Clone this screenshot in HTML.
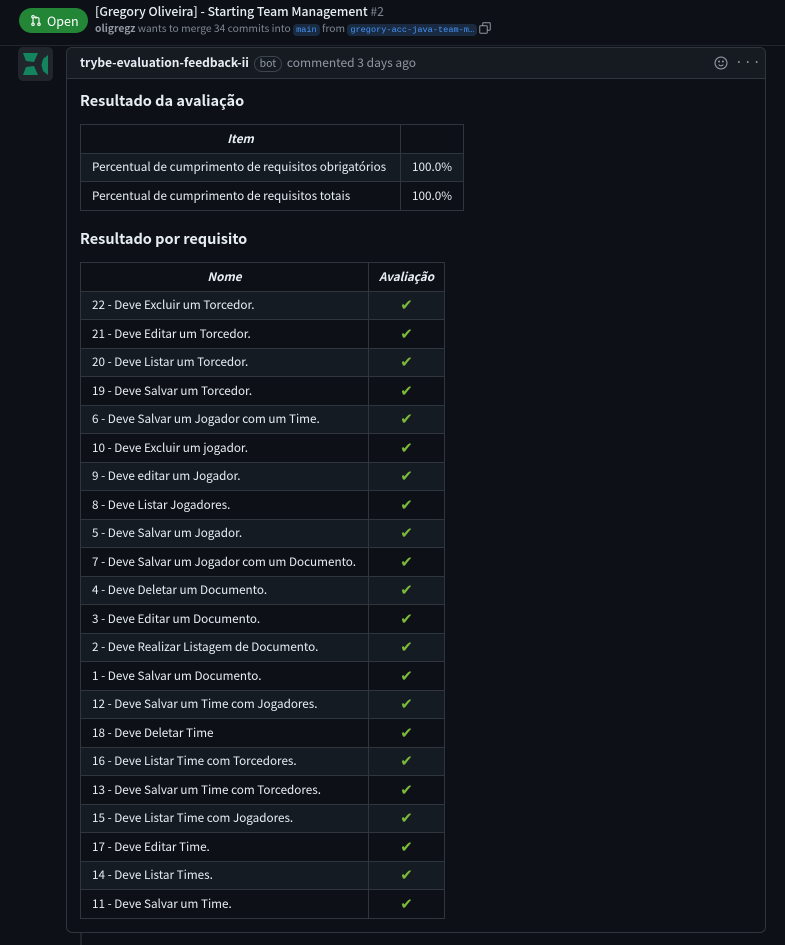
<!DOCTYPE html>
<html><head><meta charset="utf-8"><style>
*{box-sizing:border-box;margin:0;padding:0}
body{width:785px;height:945px;background:#0d1117;color:#e6edf3;font-family:"Noto Sans CJK JP","Liberation Sans",sans-serif;overflow:hidden;position:relative}
.badge{position:absolute;left:19px;top:8px;width:69px;height:25px;background:#238636;border-radius:13px;color:#fff;font-size:12.5px;line-height:25px;padding-left:28px}
.badge svg{position:absolute;left:11px;top:6px}
.title{position:absolute;left:95px;top:2px;font-size:12.2px;font-weight:500;line-height:18px;white-space:nowrap}
.title span{color:#7d8590;font-weight:400}
.sub{position:absolute;left:95px;top:20px;font-size:10.3px;color:#7d8590;line-height:16px;white-space:nowrap}
.sub b{color:#9198a1;font-weight:600}
.code{font-family:"Liberation Mono",monospace;font-size:8.6px;background:#1a2a40;color:#4493f8;padding:1px 3px;border-radius:4px}
.line{position:absolute;left:0;top:45px;width:785px;height:1px;background:#21262d}
.tl{position:absolute;left:80px;top:930px;width:2px;height:15px;background:#21262d}
.avatar{position:absolute;left:18px;top:47px;width:35px;height:34px;background:#21262d;border-radius:5px}
.box{position:absolute;left:66px;top:47px;width:700px;height:886px;border:1px solid #30363d;border-radius:6px;background:#0d1117}
.hdr{height:31px;background:#161b22;border-bottom:1px solid #30363d;border-radius:6px 6px 0 0;font-size:12px;line-height:30px;padding-left:13px;color:#9198a1;position:relative}
.hdr b{color:#e6edf3;font-weight:600}
.bot{border:1px solid #3d444d;border-radius:10px;padding:0 5px;font-size:10.5px;line-height:14px;display:inline-block;margin:0 2px}
h3{position:absolute;left:13px;font-size:14.5px;font-weight:600;line-height:20px}
table{position:absolute;left:13px;border-collapse:collapse;font-size:11.7px;table-layout:fixed}
td,th{border:1px solid #30363d;padding:0 11px;height:28.5px;line-height:16px;white-space:nowrap;overflow:hidden}
th{font-style:italic;font-weight:600;text-align:center}
tr:nth-child(even) td{background:#151b23}
.c{text-align:center;color:#7cbb3a;font-size:15px;padding:0}
</style></head><body>
<div class="badge"><svg width="12" height="13" viewBox="0 0 16 16" fill="none" stroke="#fff" stroke-width="1.5"><circle cx="4" cy="3" r="1.6"/><circle cx="4" cy="13" r="1.6"/><circle cx="12" cy="13" r="1.6"/><path d="M4 4.6v6.8M12 11.4V6a2 2 0 0 0-2-2H7M8.5 2.5L7 4l1.5 1.5"/></svg>Open</div>
<div class="title">[Gregory Oliveira] - Starting Team Management <span>#2</span></div>
<div class="sub"><b>oligregz</b> wants to merge 34 commits into <span class="code">main</span> from <span class="code">gregory-acc-java-team-m…</span> <svg width="12" height="12" viewBox="0 0 16 16" fill="none" stroke="#9198a1" stroke-width="1.3" style="vertical-align:-2px"><rect x="1" y="5" width="10" height="10" rx="1"/><path d="M5 5V2a1 1 0 0 1 1-1h8a1 1 0 0 1 1 1v8a1 1 0 0 1-1 1h-3"/></svg></div>
<div class="line"></div>
<div class="tl"></div>
<div class="avatar"><svg width="35" height="34" viewBox="0 0 35 34" fill="#14845f"><path d="M5 6H20L16 15L8 14Z"/><path d="M5 28H20L16 19L8 20Z"/><path d="M30 8V28L25 24L23.5 18L25 12Z"/></svg></div>
<div class="box">
<div class="hdr"><b>trybe-evaluation-feedback-ii</b> <span class="bot">bot</span> commented 3 days ago
<svg style="position:absolute;left:647px;top:8px" width="14" height="14" viewBox="0 0 16 16" fill="none" stroke="#9198a1" stroke-width="1.3"><circle cx="8" cy="8" r="6.8"/><path d="M5.3 9.8c.8 1 1.6 1.4 2.7 1.4s1.9-.4 2.7-1.4"/><circle cx="5.8" cy="6.3" r=".5" fill="#9198a1"/><circle cx="10.2" cy="6.3" r=".5" fill="#9198a1"/></svg>
<span style="position:absolute;left:668px;top:-1px;color:#9198a1;font-size:14px;letter-spacing:1px">···</span></div>
<h3 style="top:43px">Resultado da avaliação</h3>
<table style="top:76px;width:383px">
<colgroup><col style="width:320px"><col style="width:63px"></colgroup>
<tr><th>Item</th><th></th></tr>
<tr><td>Percentual de cumprimento de requisitos obrigatórios</td><td>100.0%</td></tr>
<tr><td>Percentual de cumprimento de requisitos totais</td><td>100.0%</td></tr>
</table>
<h3 style="top:181px">Resultado por requisito</h3>
<table style="top:214px;width:364px">
<colgroup><col style="width:288px"><col style="width:76px"></colgroup>
<tr><th>Nome</th><th style="padding:0 4px">Avaliação</th></tr>
<tr><td>22 - Deve Excluir um Torcedor.</td><td class="c">✔</td></tr>
<tr><td>21 - Deve Editar um Torcedor.</td><td class="c">✔</td></tr>
<tr><td>20 - Deve Listar um Torcedor.</td><td class="c">✔</td></tr>
<tr><td>19 - Deve Salvar um Torcedor.</td><td class="c">✔</td></tr>
<tr><td>6 - Deve Salvar um Jogador com um Time.</td><td class="c">✔</td></tr>
<tr><td>10 - Deve Excluir um jogador.</td><td class="c">✔</td></tr>
<tr><td>9 - Deve editar um Jogador.</td><td class="c">✔</td></tr>
<tr><td>8 - Deve Listar Jogadores.</td><td class="c">✔</td></tr>
<tr><td>5 - Deve Salvar um Jogador.</td><td class="c">✔</td></tr>
<tr><td>7 - Deve Salvar um Jogador com um Documento.</td><td class="c">✔</td></tr>
<tr><td>4 - Deve Deletar um Documento.</td><td class="c">✔</td></tr>
<tr><td>3 - Deve Editar um Documento.</td><td class="c">✔</td></tr>
<tr><td>2 - Deve Realizar Listagem de Documento.</td><td class="c">✔</td></tr>
<tr><td>1 - Deve Salvar um Documento.</td><td class="c">✔</td></tr>
<tr><td>12 - Deve Salvar um Time com Jogadores.</td><td class="c">✔</td></tr>
<tr><td>18 - Deve Deletar Time</td><td class="c">✔</td></tr>
<tr><td>16 - Deve Listar Time com Torcedores.</td><td class="c">✔</td></tr>
<tr><td>13 - Deve Salvar um Time com Torcedores.</td><td class="c">✔</td></tr>
<tr><td>15 - Deve Listar Time com Jogadores.</td><td class="c">✔</td></tr>
<tr><td>17 - Deve Editar Time.</td><td class="c">✔</td></tr>
<tr><td>14 - Deve Listar Times.</td><td class="c">✔</td></tr>
<tr><td>11 - Deve Salvar um Time.</td><td class="c">✔</td></tr>
</table>
</div>
</body></html>
